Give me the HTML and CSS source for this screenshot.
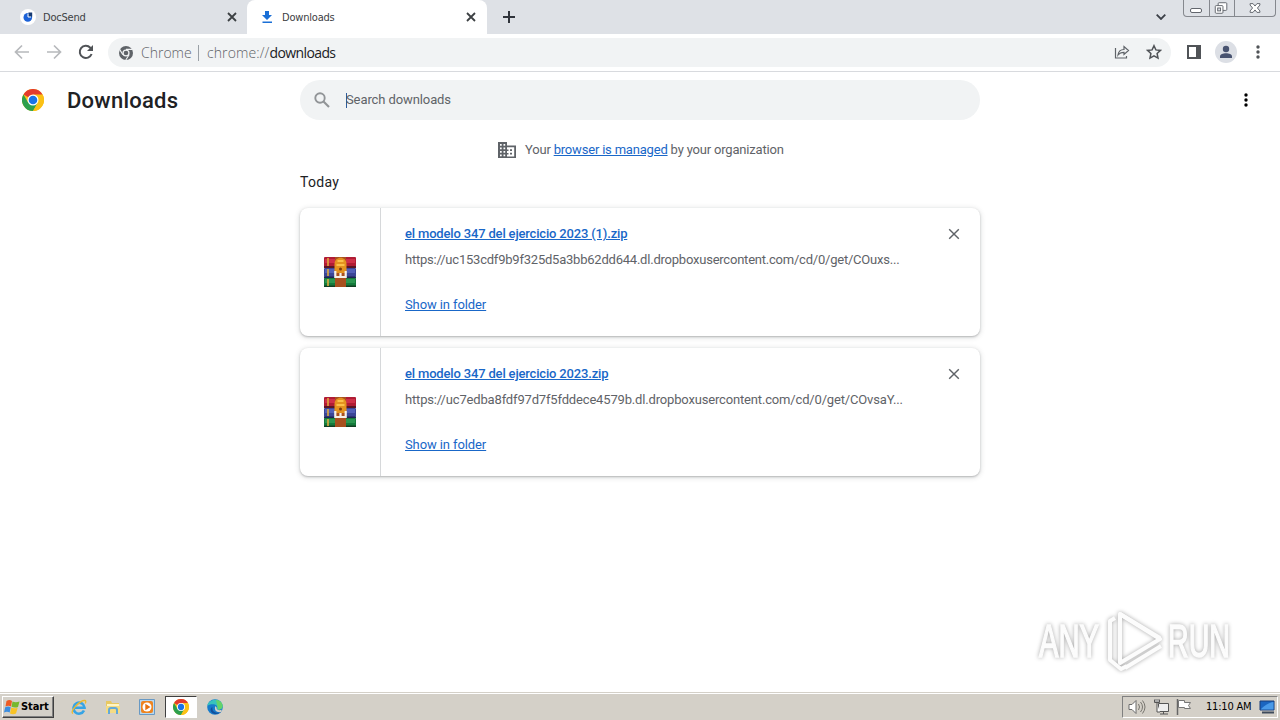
FILE: index.html
```
<!DOCTYPE html>
<html lang="en">
<head>
  <meta charset="utf-8">
  <title>Downloads</title>
  <link rel="stylesheet" href="styles.css">
</head>
<body>
  <!-- shared icons -->
  <svg class="sprites" width="0" height="0">
    <symbol id="chrome" viewBox="0 0 24 24">
      <circle cx="12" cy="12" r="12" fill="#fbc116"/>
      <path d="M12 12L1.6 6A12 12 0 0 1 22.4 6z" fill="#e33b2e"/>
      <path d="M1.6 6A12 12 0 0 0 12 24L17.2 15L12 12L6.8 15z" fill="#2da04e"/>
      <path d="M12 6H22.4A12 12 0 0 1 12 24L17.2 15z" fill="#fbc116"/>
      <circle cx="12" cy="12" r="6" fill="#fff"/>
      <circle cx="12" cy="12" r="4.7" fill="#1a73e8"/>
    </symbol>
    <symbol id="close" viewBox="0 0 10 10">
      <path d="M1 1L9 9M9 1L1 9" fill="none" stroke="currentColor"/>
    </symbol>
    <symbol id="dots" viewBox="0 0 4 14">
      <circle cx="2" cy="2" r="1.7"/><circle cx="2" cy="7" r="1.7"/><circle cx="2" cy="12" r="1.7"/>
    </symbol>
    <symbol id="winrar" viewBox="0 0 32 30">
      <rect x="0" y="0" width="32" height="10" rx="1" fill="#b01c34"/>
      <rect x="1" y="2" width="30" height="4" fill="#cf3048"/>
      <path d="M0 9h32v2H0z" fill="#5a1623"/>
      <rect x="0" y="11" width="32" height="9" rx="1" fill="#3b4696"/>
      <rect x="1" y="12" width="30" height="4" fill="#5260b8"/>
      <path d="M0 19.500h32v2H0z" fill="#1d2452"/>
      <rect x="0" y="21" width="32" height="9" rx="1" fill="#157a3c"/>
      <rect x="1" y="22" width="30" height="4" fill="#2b9650"/>
      <path d="M0 28.500h32V30H0z" fill="#123e22"/>
      <path d="M4 1v8M4 12v7M4 22v7" stroke="#e0a83c" stroke-width="1.600"/>
      <rect x="11" y="0" width="11" height="30" fill="#a8501f"/>
      <path d="M10.500 7c0-8.500 12-8.500 12 0v9h-12z" fill="#e3921f"/>
      <path d="M13.500 4h6M12.500 8h8" stroke="#fbc04a" stroke-width="2"/>
      <circle cx="16.500" cy="12" r="1.500" fill="#7c3a0c"/>
      <path d="M11.300 14v6h10.400v-6M16.500 16v4" fill="none" stroke="#f5f0ea" stroke-width="2.200"/>
    </symbol>
  </svg>

  <div class="browser">
    <div class="tabs">
      <div class="tab">
        <svg class="favicon" viewBox="0 0 16 16"><circle cx="8" cy="8" r="8" fill="#fff"/><circle cx="7.800" cy="8.400" r="4.300" fill="#1c62d8"/><path d="M8.500 3.500h3.700v4.200H8.500z" fill="#173b73"/><path d="M8 4.500V8h3" fill="none" stroke="#fff"/></svg>
        <span class="tab-title">DocSend</span>
        <svg class="tab-close"><use href="#close"/></svg>
      </div>
      <div class="tab active">
        <svg class="favicon" viewBox="0 0 16 16"><path d="M6 2h4v4h3l-5 5-5-5h3zM3.500 12.500h9.500V14H3.500z" fill="#1a6fd6"/></svg>
        <span class="tab-title">Downloads</span>
        <svg class="tab-close"><use href="#close"/></svg>
      </div>
      <svg class="new-tab" viewBox="0 0 12 12"><path d="M6 0v12M0 6h12" stroke="#30343b" stroke-width="2"/></svg>
      <svg class="chevron" viewBox="0 0 10 6"><path d="M.7.7L5 5 9.300.7" fill="none" stroke="#3c4048" stroke-width="1.800"/></svg>
      <div class="window-buttons">
        <svg width="25" height="16" viewBox="0 0 25 16"><rect x="6.500" y="8.500" width="11" height="4" rx="1.500" fill="#fff" stroke="#62666d"/></svg>
        <svg width="25" height="16" viewBox="0 0 25 16"><rect x="8.500" y="2.500" width="9" height="8" rx="1" fill="#fff" stroke="#62666d"/><rect x="5.500" y="5.500" width="8" height="8" rx="1" fill="#fff" stroke="#62666d"/><rect x="8" y="8" width="3" height="3" fill="#dee1e6" stroke="#62666d"/></svg>
        <svg width="41" height="16" viewBox="0 0 41 16"><path d="M15.500 3.500h3l2 2.500 2-2.500h3v1.500L23 8l2.500 3v1.500h-3l-2-2.500-2 2.500h-3V11L18 8l-2.500-3z" fill="#fff" stroke="#62666d"/></svg>
      </div>
    </div>

    <div class="toolbar">
      <svg class="nav" viewBox="0 0 16 16"><path d="M15 8H2M8 1.500L1.500 8 8 14.500" fill="none" stroke="#b7b9bc" stroke-width="1.700"/></svg>
      <svg class="nav" viewBox="0 0 16 16"><path d="M1 8h13M8 1.500L14.500 8 8 14.500" fill="none" stroke="#b7b9bc" stroke-width="1.700"/></svg>
      <svg class="nav" viewBox="0 0 16 16"><path d="M13.600 10A6.100 6.100 0 1 1 12.300 3.700L14 5.400" fill="none" stroke="#505357" stroke-width="2"/><path d="M15 1v6H9z" fill="#505357"/></svg>
      <div class="omnibox">
        <svg class="site" viewBox="0 0 16 16"><circle cx="8" cy="8" r="7" fill="#5f6368"/><circle cx="8" cy="8" r="3.600" fill="#f1f3f4"/><circle cx="8" cy="8" r="2.300" fill="#5f6368"/><path d="M8 4.400h6.500M4.900 9.800L1.600 4.400M11.100 9.800L7.800 15" stroke="#f1f3f4" stroke-width="1.100"/></svg>
        <span class="site-name">Chrome</span>
        <span class="divider"></span>
        <span class="url">chrome://<b>downloads</b></span>
        <svg class="share" viewBox="0 0 16 16"><path d="M1.500 4v10h11V12M4 11c.5-4 3-5.500 6-5.500V2.500L14.500 6.500 10 10.500V8.300C7.500 8.300 5.500 9 4 11z" fill="none" stroke="#5f6368" stroke-width="1.200"/></svg>
        <svg class="star" viewBox="0 0 16 16"><path d="M8 1.700l1.900 4.200 4.600.5-3.400 3.100.9 4.600L8 11.800l-4 2.300.9-4.600L1.500 6.400l4.600-.5z" fill="none" stroke="#505357" stroke-width="1.500"/></svg>
      </div>
      <svg class="panel" viewBox="0 0 14 14"><path d="M1 1h12v12H1z" fill="#fff" stroke="#505357" stroke-width="2"/><path d="M9 1h4v12H9z" fill="#505357"/></svg>
      <svg class="avatar" viewBox="0 0 22 22"><circle cx="11" cy="11" r="11" fill="#dcdfe5"/><circle cx="11" cy="8" r="3.200" fill="#485370"/><path d="M5 17v-1.500c0-4.400 12-4.400 12 0V17z" fill="#485370"/></svg>
      <svg class="menu"><use href="#dots"/></svg>
    </div>
  </div>

  <div class="page">
    <header class="header">
      <svg class="logo"><use href="#chrome"/></svg>
      <h1>Downloads</h1>
      <div class="search">
        <svg viewBox="0 0 16 16"><circle cx="6" cy="6" r="4.700" fill="none" stroke="#919497" stroke-width="1.900"/><path d="M9.500 9.500l5.500 5.500" stroke="#919497" stroke-width="2.100"/></svg>
        <span class="caret"></span><span class="placeholder">Search downloads</span>
      </div>
      <svg class="more"><use href="#dots"/></svg>
    </header>

    <div class="managed">
      <svg viewBox="0 0 18 16"><path d="M0 0h9v3.500h9V16H0z" fill="#5f6368"/><path d="M2 2h1.700v1.700H2zM5.500 2h1.700v1.700H5.500zM2 5.500h1.700v1.700H2zM5.500 5.500h1.700v1.700H5.500zM2 9h1.700v1.700H2zM5.500 9h1.700v1.700H5.500zM2 12.500h1.700v1.700H2zM5.500 12.500h1.700v1.700H5.500zM9 5.200h7.200v9.200H9v-2h1.500v-1.500H9V9h1.500V7.400H9z" fill="#fff"/><path d="M12 7.300h2v1.800h-2zM12 10.800h2v1.800h-2z" fill="#5f6368"/></svg>
      <span class="managed-text">Your <a>browser is managed</a> by your organization</span>
    </div>

    <main class="list">
      <h2>Today</h2>
      <div class="card">
        <div class="file-icon"><svg><use href="#winrar"/></svg></div>
        <div class="details">
          <a class="name">el modelo 347 del ejercicio 2023 (1).zip</a>
          <span class="source">https://uc153cdf9b9f325d5a3bb62dd644.dl.dropboxusercontent.com/cd/0/get/COuxs...</span>
          <a class="show">Show in folder</a>
        </div>
        <svg class="remove"><use href="#close"/></svg>
      </div>
      <div class="card">
        <div class="file-icon"><svg><use href="#winrar"/></svg></div>
        <div class="details">
          <a class="name">el modelo 347 del ejercicio 2023.zip</a>
          <span class="source wide">https://uc7edba8fdf97d7f5fddece4579b.dl.dropboxusercontent.com/cd/0/get/COvsaY...</span>
          <a class="show">Show in folder</a>
        </div>
        <svg class="remove"><use href="#close"/></svg>
      </div>
    </main>
  </div>

  <svg class="watermark" viewBox="0 0 224 70">
    <g class="mark">
      <text x="5" y="51" textLength="60" lengthAdjust="spacingAndGlyphs">ANY</text>
      <text x="134" y="51" textLength="62" lengthAdjust="spacingAndGlyphs">RUN</text>
      <path d="M81 12l-5 3v39l11 9 6-3"/>
      <path d="M86 8v49l40-24z"/>
      <path d="M86 8l40 24M91 62l36-22"/>
    </g>
  </svg>

  <div class="taskbar">
    <div class="start">
      <svg viewBox="0 0 16 16"><path d="M2.500 2q3-2 5.500 0L7 7.500Q4.500 6 1.500 7.500z" fill="#ed5b25"/><path d="M8.500 2.500q3 1.500 7 0L14 8Q11 9.300 7.500 7.800z" fill="#76b82d"/><path d="M1.200 8.200q3-1.500 5.500 0L5.700 13.500Q3 12 0 13.500z" fill="#3b8de0"/><path d="M7.300 8.500q3 1.500 6.400.2L12 14.500q-3 1.500-6 0z" fill="#f8c325"/></svg>
      <b>Start</b>
    </div>
    <div class="apps">
      <div class="app"><svg viewBox="0 0 16 16"><path d="M13 11.500A5.500 5.500 0 1 1 13.500 8.700H4" fill="none" stroke="#36a4e5" stroke-width="2.600"/><path d="M2 14.500C-2 13 9 1 14 1.500c1 .2 1 1.500.3 3" fill="none" stroke="#edb92e" stroke-width="1.300"/></svg></div>
      <div class="app"><svg viewBox="0 0 16 16"><path d="M1 2h5l1 2h7v10H1z" fill="#e8c862"/><path d="M2 5h12v3H2z" fill="#fff5c4"/><path d="M1 7h14v7H1z" fill="#f4db83"/><path d="M4 15v-4q0-2 2-2h4q2 0 2 2v4" fill="none" stroke="#63a9d8" stroke-width="2"/></svg></div>
      <div class="app"><svg viewBox="0 0 16 16"><path d="M.5.5h15v15H.5z" fill="#b7d8f0" stroke="#6899c4"/><rect x="2" y="2" width="12" height="12" rx="2" fill="#ee8420"/><circle cx="8" cy="8" r="4.500" fill="#fff"/><path d="M6.300 4.800v6.400L11.500 8z" fill="#e6720f"/></svg></div>
      <div class="app open"><svg><use href="#chrome"/></svg></div>
      <div class="app"><svg viewBox="0 0 16 16"><circle cx="8" cy="8" r="7.800" fill="#167bcb"/><path d="M.4 7C1-.5 14-2 15.700 6.500c.5 4-4 5-6 3.500 1-2 .5-4-2-4.500S1.500 5.500.4 7z" fill="#38c3bd"/><path d="M9 1q6 .5 6.700 6-.5 3.500-4.500 3.700z" fill="#65d36a"/><path d="M5.500 8c-1 5 4 7 8.500 5-4 3.500-10 2-10.500-2Q3.500 8.500 5.500 8z" fill="#124f9c"/><path d="M8 7.200q2 .2 1.800 2.800 2 2 5 .8l-.8 2.200q-7 1-6-5.800z" fill="#d4d0c8"/></svg></div>
    </div>
    <div class="tray">
      <svg width="18" viewBox="0 0 18 16"><path d="M1 5.500h3l4-4v13l-4-4H1z" fill="#fff" stroke="#6b6b6b"/><path d="M10.500 5q2 3 0 6M12.500 3q4 5 0 10M14.500 1.500q5 6.500 0 13" fill="none" stroke="#77756f"/></svg>
      <svg width="16" viewBox="0 0 16 16"><path d="M5.500 4.500h10v8h-10zM7 15h8M10.500 12.500V15" fill="#eee" stroke="#555"/><path d="M1.500.5v3h5v-3M3 0v3M5 0v3M4 4v9h3" fill="#fff" stroke="#555"/></svg>
      <svg width="16" viewBox="0 0 16 16"><path d="M1.500 0v16" stroke="#666" stroke-width="1.500"/><path d="M2.500 1.500h6v2h6l-2 3 2 3h-6v-1h-6z" fill="#fff" stroke="#777"/></svg>
      <span class="clock">11:10 AM</span>
      <svg class="desktop" width="16" viewBox="0 0 16 14"><path d="M1 1h14v9H1z" fill="#1b65c0" stroke="#183c78"/><path d="M1.500 9.500Q8 3 14.500 2v7.500z" fill="#4a9ae8"/><path d="M3 12.500h12" stroke="#3e4b5c" stroke-width="2"/></svg>
    </div>
  </div>
</body>
</html>
```
FILE: styles.css
```
* {
  box-sizing: border-box;
}

body {
  margin: 0;
  width: 1280px;
  height: 720px;
  overflow: hidden;
  display: flex;
  flex-direction: column;
  background: #fff;
  font-family: Roboto, "Liberation Sans", sans-serif;
  color: #202124;
}

svg {
  display: block;
  flex: none;
}

.sprites {
  position: absolute;
}

/* tab strip */
.tabs {
  display: flex;
  align-items: center;
  height: 34px;
  background: #dee1e6;
}

.tab {
  display: flex;
  align-items: center;
  width: 247px;
  height: 34px;
  padding: 0 10px 0 20px;
  font-family: "DejaVu Sans Condensed", "DejaVu Sans", sans-serif;
  font-stretch: condensed;
  font-size: 11px;
  color: #3c4043;
}

.tab.active {
  width: 240px;
  padding: 0 11px 0 12px;
  background: #fff;
  border-radius: 8px 8px 0 0;
}

.favicon {
  width: 16px;
  height: 16px;
}

.tab-title {
  flex: 1;
  margin-left: 7px;
  letter-spacing: -0.2px;
}

.tab-close {
  width: 10px;
  height: 10px;
  color: #3c4043;
  stroke-width: 1.8;
}

.new-tab {
  width: 12px;
  height: 12px;
  margin-left: 16px;
}

.chevron {
  width: 10px;
  height: 6px;
  margin-left: auto;
}

.window-buttons {
  display: flex;
  align-self: flex-start;
  width: 93px;
  height: 17px;
  margin: 0 4px 0 17px;
  border: 1px solid #85888e;
  border-top: 0;
  border-radius: 0 0 4px 4px;
}

.window-buttons svg + svg {
  border-left: 1px solid #85888e;
}

/* toolbar */
.toolbar {
  display: flex;
  align-items: center;
  height: 38px;
  padding-left: 14px;
  border-bottom: 1px solid #d8dade;
}

.nav {
  width: 16px;
  height: 16px;
  margin-right: 16px;
  margin-bottom: 1px;
}

.omnibox {
  display: flex;
  align-items: center;
  width: 1063px;
  height: 29px;
  margin-left: -2px;
  padding: 0 9px 0 10px;
  border-radius: 15px;
  background: #f1f3f4;
  font-family: "Open Sans", "Noto Sans", sans-serif;
  font-weight: 300;
  font-size: 14px;
  color: #5f6368;
}

.site {
  width: 16px;
  height: 16px;
}

.site-name {
  width: 50px;
  margin-left: 7px;
}

.divider {
  width: 1px;
  height: 16px;
  margin: 0 8px 0 7px;
  background: #9aa0a6;
}

.url {
  letter-spacing: 0.1px;
}

.url b {
  font-weight: 400;
  letter-spacing: -0.6px;
  color: #202124;
}

.share {
  width: 16px;
  height: 16px;
  margin-left: auto;
  margin-bottom: 1px;
}

.star {
  width: 16px;
  height: 16px;
  margin-left: 16px;
  margin-bottom: 1px;
}

.panel {
  width: 14px;
  height: 14px;
  margin-left: 16px;
  margin-bottom: 1px;
}

.avatar {
  width: 22px;
  height: 22px;
  margin-left: 14px;
  margin-bottom: 1px;
}

.menu {
  width: 4px;
  height: 14px;
  margin-left: 19px;
  margin-bottom: 1px;
  fill: #505357;
}

/* downloads page */
.page {
  flex: 1;
}

.header {
  display: flex;
  align-items: center;
  height: 56px;
  padding-left: 22px;
}

.logo {
  width: 22px;
  height: 22px;
}

h1 {
  width: 233px;
  margin: 0 0 0 23px;
  font-size: 22px;
  font-weight: 500;
  letter-spacing: 0.25px;
}

.search {
  display: flex;
  align-items: center;
  width: 680px;
  height: 40px;
  padding-left: 14px;
  border-radius: 20px;
  background: #f1f3f4;
  font-size: 13px;
  color: #5f6368;
}

.search svg {
  width: 16px;
  height: 16px;
}

.caret {
  width: 1px;
  height: 15px;
  margin-left: 16px;
  background: #2d5c9c;
}

.placeholder {
  margin: 0 0 2px -1px;
  letter-spacing: -0.1px;
}

.more {
  width: 4px;
  height: 14px;
  margin-left: 264px;
}

.managed {
  display: flex;
  align-items: center;
  height: 44px;
  padding-left: 498px;
  font-size: 13px;
  color: #5f6368;
}

.managed svg {
  width: 18px;
  height: 16px;
  margin-right: 9px;
}

.managed-text {
  margin-bottom: 2px;
  letter-spacing: -0.19px;
}

a {
  color: #1967c8;
  text-decoration: underline;
}

.list {
  width: 680px;
  margin: 0 auto;
}

h2 {
  margin: 0;
  height: 36px;
  line-height: 21px;
  font-size: 14px;
  font-weight: 400;
  letter-spacing: 0.3px;
}

.card {
  display: flex;
  height: 128px;
  margin-bottom: 12px;
  border-radius: 8px;
  background: #fff;
  box-shadow: 0 1px 2px rgba(60, 64, 67, .3), 0 1px 5px 1px rgba(60, 64, 67, .15);
}

.file-icon {
  display: flex;
  align-items: center;
  justify-content: center;
  width: 81px;
  border-right: 1px solid #d6d8da;
}

.file-icon svg {
  width: 32px;
  height: 30px;
}

.details {
  display: flex;
  flex-direction: column;
  align-items: flex-start;
  flex: 1;
  padding: 16px 0 0 24px;
  font-size: 13px;
  line-height: 20px;
  white-space: nowrap;
}

.name {
  font-weight: 500;
  letter-spacing: -0.17px;
}

.source {
  margin-top: 6px;
  letter-spacing: -0.22px;
  color: #5f6368;
}

.source.wide {
  letter-spacing: -0.165px;
}

.show {
  margin-top: 25px;
  letter-spacing: -0.1px;
}

.remove {
  width: 12px;
  height: 12px;
  margin: 20px 20px 0 0;
  color: #5f6368;
  stroke-width: 1.2;
}

/* watermark over the page corner */
.watermark {
  position: absolute;
  left: 1034px;
  top: 606px;
  width: 224px;
  height: 70px;
}

.mark {
  fill: #fcfcfc;
  stroke: #fcfcfc;
  filter: drop-shadow(0 0 2px rgba(0, 0, 0, .35));
}

.mark text {
  font-family: "Liberation Sans", Arial, sans-serif;
  font-size: 46px;
  stroke-width: 1.5;
}

.mark path {
  fill: none;
  stroke-width: 4;
  stroke-linejoin: round;
}

/* taskbar */
.taskbar {
  display: flex;
  align-items: center;
  height: 28px;
  padding: 0 2px 0 2px;
  background: #d4d0c8;
  border-top: 1px solid #d4d0c8;
  box-shadow: inset 0 1px #fff;
}

.start {
  display: flex;
  align-items: center;
  width: 52px;
  height: 22px;
  padding-left: 1px;
  border: 1px solid;
  border-color: #fff #404040 #404040 #fff;
  box-shadow: inset -1px -1px #808080;
  font-family: "DejaVu Sans Condensed", "DejaVu Sans", sans-serif;
  font-stretch: condensed;
  font-size: 11px;
  color: #000;
}

.start svg {
  width: 16px;
  height: 16px;
}

.start b {
  margin-left: 1px;
  letter-spacing: -0.1px;
}

.apps {
  display: flex;
  gap: 2px;
  margin-left: 9px;
}

.app {
  display: flex;
  align-items: center;
  justify-content: center;
  width: 32px;
  height: 22px;
}

.app svg {
  width: 16px;
  height: 16px;
}

.app.open {
  border: 1px solid;
  border-color: #404040 #fff #fff #404040;
  background: #fff;
}

.tray {
  display: flex;
  align-items: center;
  width: 156px;
  height: 22px;
  margin-left: auto;
  padding-left: 5px;
  border: 1px solid;
  border-color: #808080 #fff #fff #808080;
  font-family: "DejaVu Sans Condensed", "DejaVu Sans", sans-serif;
  font-stretch: condensed;
  font-size: 11px;
  color: #000;
}

.tray svg {
  height: 16px;
  margin-right: 7px;
}

.clock {
  width: 47px;
  margin-left: 7px;
  white-space: nowrap;
  letter-spacing: -0.2px;
}

.tray .desktop {
  margin: 0 0 0 6px;
}
```
